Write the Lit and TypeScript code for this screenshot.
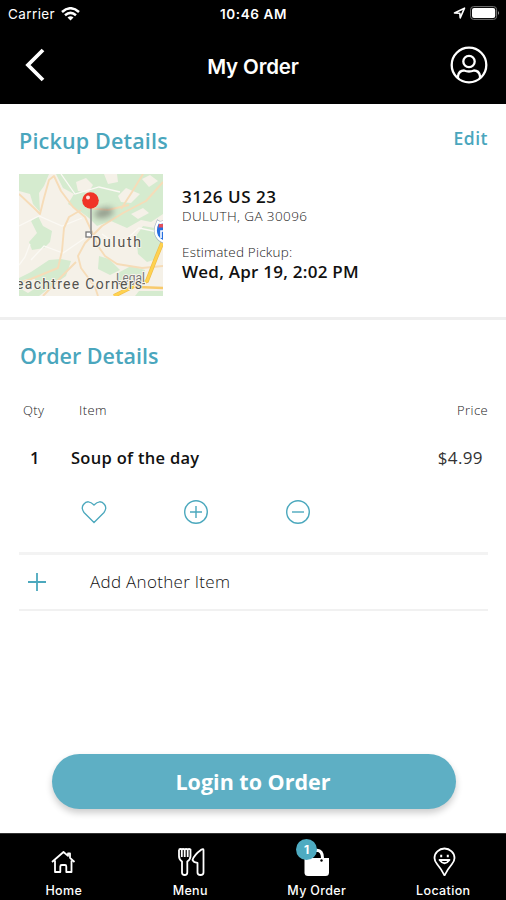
import { LitElement, html, css, svg } from "lit";
import { customElement } from "lit/decorators.js";

const navIcons = {
  home: svg`<path d="M3 15 L14.500 5 L19 8.900 V6.500 H21 V10.800 L25.500 15 M6 13.500 V25 H11.300 V19.500 Q11.300 18 12.800 18 H16 Q17.300 18 17.300 19.500 V25 H22.500 V13.500"/>`,
  menu: svg`<path d="M3 2.500 V9 Q3 12.500 6 14.500 V25.500 Q6 28 8.700 28 Q11.300 28 11.300 25.500 V14.500 Q14.500 12.500 14.500 9 V2.500 Q13 1.500 11.700 2.500 V10 M11.700 2.500 Q10 1.500 8.700 2.500 V10 M8.700 2.500 Q7 1.500 5.800 2.500 V10 M5.800 2.500 Q4.500 1.500 3 2.500 M27.500 3 Q27.500 1.500 25.500 2.500 Q18 8 16.500 13 Q17.500 15.500 21.500 16 V25.500 Q21.500 28 24.500 28 Q27.500 28 27.500 25.500 Z"/>`,
  bag: svg`<path d="M2.500 11 H27 V25.500 Q27 29 23.500 29 H6 Q2.500 29 2.500 25.500Z" fill="#fff" stroke="none"/><path d="M9 13 V8 Q9 3.200 15 3.200 Q20.500 3.500 20.500 11" stroke-width="3"/><circle cx="19.500" cy="13.500" r="1.200" fill="#000" stroke="none"/>`,
  pin: svg`<path d="M15.500 28.500 Q13 23 8 17 Q5.500 14 5.500 11 A10 9.500 0 0 1 25.500 11 Q25.500 14 23 17 Q18 23 15.500 28.500Z"/><path d="M10.500 13 Q15.500 19.500 20.500 13Z"/><path d="M11.200 9h2M17.800 9h2" stroke-width="2.400"/>`,
};

@customElement("map-preview")
class MapPreview extends LitElement {
  static styles = css`
    :host { display: block; width: 144px; height: 122px; }
    svg { display: block; }
    text { font-family: Roboto, "Liberation Sans", sans-serif; }
  `;
  render() {
    return html`<svg width="144" height="122" viewBox="0 0 144 122">
      <defs>
        <filter id="soft" x="-50%" y="-50%" width="200%" height="200%"><feGaussianBlur stdDeviation="3"/></filter>
        <clipPath id="frame"><rect width="144" height="122"/></clipPath>
      </defs>
      <g clip-path="url(#frame)">
        <rect width="144" height="122" fill="#f5f1e8"/>
        <g fill="#d5ebcf">
          <path d="M0 0H30L25 12 20 19 21 38 14 30 11 20 0 17Z"/>
          <path d="M37 0H144V40L132 48 122 46 108 54 92 47 78 52 70 44 62 38 49 30 55 20 44 14Z"/>
          <path d="M12 47 19 42 24 52 33 57 31 68 25 74 13 76 10 68 18 59Z"/>
          <path d="M0 104 12 98 30 86 42 85 52 87 47 102 33 112 20 122H0Z"/>
          <path d="M117 62 124 52 142 55 144 72 138 85 128 88 119 80Z"/>
          <path d="M80 82 90 85 101 96 91 101 79 95Z"/>
          <path d="M97 100 112 92 126 96 124 108 111 113 97 109Z"/>
          <path d="M120 117 144 117V122H116Z"/>
        </g>
        <g fill="#f5f1e8">
          <path d="M57 8 67 4 74 11 69 19 59 17Z"/>
          <path d="M99 22 107 14 121 20 112 29 102 28Z"/>
          <path d="M4 106 15 104 20 112 9 119 2 115Z"/>
          <path d="M85 0H98L99 8 89 10Z"/>
          <path d="M123 5 131 1 139 7 130 13Z"/>
          <path d="M112 40 124 34 130 39 119 45Z"/>
        </g>
        <g fill="none" stroke="#fbf9f4" stroke-width="1.300">
          <path d="M0 52 20 42 43 52 63 44M12 86 25 72 44 79 66 64M83 60 100 72 120 54 144 59M42 0 56 20 80 13 101 18M11 70 6 83 0 91"/>
        </g>
        <g fill="none" stroke="#f6dcb8" stroke-width="1.900" stroke-linejoin="round">
          <path d="M0 20 15 34 21 40 25 24 30 6 35 2 42 17 54 33 66 43 73 58 79 72 86 82 98 90 123 94 144 92"/>
          <path d="M144 8 127 27 104 39 83 52 66 69 59 82 62 94 76 113 79 122"/>
          <path d="M124 0 113 18 102 35"/>
          <path d="M62 36 50 43 45 54 43 77 39 94 12 105 0 109"/>
          <path d="M68 34 89 36 110 31"/>
          <path d="M57 88 46 99 24 122"/>
        </g>
        <path d="M144 67 137 84 128 107 113 113 95 122" fill="none" stroke="#efbd4b" stroke-width="4"/>
        <path d="M144 67 137 84 128 107 113 113 95 122" fill="none" stroke="#ffd24f" stroke-width="2.600"/>
        <path d="M119 113 144 114" stroke="#f8ca6b" stroke-width="2.600"/>
        <path d="M139 48 Q142 50 146 47 L152 52 V68 Q142 69 138 62 Q135 56 139 48Z" fill="#276fe0" stroke="#9eafc0" stroke-width="3.600"/>
        <path d="M139 48 Q142 50 146 47 L152 52 V68 Q142 69 138 62 Q135 56 139 48Z" fill="#276fe0" stroke="#fff" stroke-width="2.400"/>
        <path d="M140 50H146V53.500H139.500Z" fill="#e3505c"/>
        <path d="M145 57H142V64" fill="none" stroke="#fff" stroke-width="1.600"/>
        <ellipse cx="85" cy="39" rx="10" ry="5" fill="#5c5a54" opacity=".55" filter="url(#soft)" transform="rotate(-14 85 39)"/>
        <rect x="67" y="58" width="5.500" height="5" fill="#fff" stroke="#777" stroke-width="1.300"/>
        <path d="M72 30V60" stroke="#949494" stroke-width="1.700"/>
        <circle cx="71.500" cy="26.500" r="8.300" fill="#f03426"/>
        <circle cx="69" cy="23.500" r="2" fill="#fff" opacity=".85"/>
        <g stroke="#f8f5ed" stroke-width="1.800" paint-order="stroke">
          <text x="97" y="108" font-size="12" fill="#777" textLength="29" text-decoration="underline">Legal</text>
          <text x="73" y="73" font-size="14" fill="#55534f" textLength="49">Duluth</text>
          <text x="-3" y="115" font-size="14" fill="#55534f" textLength="126">eachtree Corners</text>
        </g>
      </g>
    </svg>`;
  }
}

@customElement("app-root")
class AppRoot extends LitElement {
  static styles = css`
    * { box-sizing: border-box; }
    :host { display: flex; flex-direction: column; height: 900px; background: #fff; color: #111;
      font-family: "Open Sans", "Noto Sans", sans-serif; white-space: nowrap; overflow: hidden; }
    svg { display: block; flex: none; }
    .top { background: #000; color: #fff; height: 104px; flex: none; font-family: Inter, Roboto, sans-serif; }
    .status { height: 27px; display: grid; grid-template-columns: 1fr auto 1fr; align-items: center; padding: 0 6px 0 8px; }
    .carrier { display: flex; gap: 6px; align-items: center; font-size: 13.500px; letter-spacing: .4px; height: 24px; }
    .clock { font-size: 13.500px; font-weight: 600; letter-spacing: .6px; margin-right: 1px; height: 18px; line-height: 18px; }
    .power { display: flex; justify-content: flex-end; align-items: center; gap: 4px; height: 25px; margin-top: -1px; }
    .bar { height: 77px; display: grid; grid-template-columns: 1fr auto 1fr; align-items: center; padding: 0 18px 0 24px; }
    .bar h1 { font-size: 20.500px; font-weight: 600; margin: 1px 6px 0 0; letter-spacing: -.15px; }
    .back { margin-top: -2px; }
    .user { justify-self: end; margin-top: -2px; }
    .pickup { height: 213px; padding: 22px 18px 0 19px; flex: none; }
    .heading { display: flex; justify-content: space-between; height: 48px; color: #4aa6bd; }
    h2 { margin: 0; color: #4aa6bd; font-size: 21.500px; line-height: 30px; font-weight: 600; letter-spacing: .17px; }
    .order h2 { letter-spacing: 0; padding-left: 2px; }
    .edit { font-size: 17.500px; line-height: 25px; font-weight: 600; letter-spacing: .5px; }
    .place { display: flex; gap: 19px; }
    .address { padding-top: 12px; }
    .strong { font-size: 17px; line-height: 23px; font-weight: 600; letter-spacing: .25px; }
    .street { letter-spacing: .55px; line-height: 22px; }
    .small { font-size: 13.500px; line-height: 16px; color: #222; font-weight: 300; letter-spacing: .4px; }
    .estimate { margin-top: 20px; letter-spacing: .2px; }
    .rule { height: 3px; background: #efefef; flex: none; }
    .order { padding: 21px 18px 0; flex: none; }
    .row { display: grid; grid-template-columns: 53px 1fr auto; align-items: center; }
    .labels { height: 18px; margin-top: 30px; font-size: 13px; color: #222; font-weight: 300; letter-spacing: .4px; }
    .labels span:first-child { padding-left: 5px; }
    .labels span:nth-child(2) { padding-left: 8px; }
    .item { height: 26px; margin-top: 25px; font-size: 16.500px; font-weight: 600; letter-spacing: .3px; }
    .item span:first-child { padding-left: 12px; }
    .price { font-weight: 400; color: #333; padding-right: 5px; font-size: 17px; letter-spacing: .4px; }
    .actions { display: flex; gap: 76px; padding: 0 0 0 63px; margin-top: 29px; height: 53px; }
    .add { display: flex; align-items: center; height: 59px; margin: 0 0 0 1px; border-top: 3px solid #f3f3f3; border-bottom: 2px solid #f1f1f1; font-size: 17px; color: #111; font-weight: 300; letter-spacing: .3px; padding: 0 0 1px 8px; gap: 43px; }
    .space { flex: 1; }
    .login { width: 404px; height: 55px; flex: none; margin: 0 0 24px 52px; border: 0; border-radius: 28px; background: #5eafc4; color: #fff; font: 700 21.500px "Open Sans", sans-serif; box-shadow: 0 4px 7px #0003; padding: 0 2px 0 0; }
    nav { height: 67px; flex: none; background: #000; color: #fff; display: grid; grid-template-columns: repeat(4, 1fr); font: 500 12.500px Inter, Roboto, sans-serif; letter-spacing: .35px; border-top: 1px solid #333; }
    .tab { display: flex; flex-direction: column; align-items: center; padding: 13px 0 0 1px; line-height: 16px; gap: 7px; }
    .icon { position: relative; height: 29px; }
    .icon svg { fill: none; stroke: #fff; stroke-width: 1.800; stroke-linejoin: round; }
    .badge { position: absolute; left: -6px; top: -8px; width: 21px; height: 21px; border-radius: 50%; background: #4eabc1; text-align: center; line-height: 21px; font-weight: 700; font-size: 12px; }
  `;

  private tab(name: string, icon: unknown, badge = "") {
    return html`<div class="tab"><div class="icon"><svg width="29" height="29" viewBox="0 0 29 29">${icon}</svg>${badge ? html`<span class="badge">${badge}</span>` : ""}</div><span>${name}</span></div>`;
  }

  render() {
    return html`
      <header class="top">
        <div class="status">
          <div class="carrier"><span>Carrier</span><svg width="19" height="14" viewBox="0 0 19 14" fill="none" stroke="#fff" stroke-width="2.500"><path d="M1 5 Q9.500-2.500 18 5M4 8.300 Q9.500 3.500 15 8.300"/><path d="M9.500 13.500 6.500 10.500Q9.500 8 12.500 10.500Z" fill="#fff" stroke="none"/></svg></div>
          <div class="clock">10:46 AM</div>
          <div class="power"><svg width="13" height="12" viewBox="0 0 13 12"><path d="M1.500 6 11.500 1.200 7.200 10.800 6.800 6.200Z" fill="none" stroke="#fff" stroke-width="1.600" stroke-linejoin="round"/></svg><svg width="30" height="14" viewBox="0 0 30 14"><rect x=".6" y=".6" width="26" height="12.800" rx="3" fill="none" stroke="#777"/><rect x="2" y="2" width="23.200" height="10" rx="2" fill="#fff"/><path d="M28 5Q30 7 28 9Z" fill="#999"/></svg></div>
        </div>
        <div class="bar">
          <svg class="back" width="22" height="34" viewBox="0 0 22 34"><path d="M19 2 4 17 19 32" fill="none" stroke="#fff" stroke-width="3.800"/></svg>
          <h1>My Order</h1>
          <svg class="user" width="38" height="38" viewBox="0 0 38 38" fill="none" stroke="#fff" stroke-width="2.300"><circle cx="19" cy="19" r="17.300"/><circle cx="19" cy="15.500" r="5.700"/><path d="M8 32V30Q9 24.500 14 24.500Q19 26.500 24 24.500Q29 24.500 30 30V32"/></svg>
        </div>
      </header>
      <section class="pickup">
        <div class="heading"><h2>Pickup Details</h2><span class="edit">Edit</span></div>
        <div class="place"><map-preview></map-preview>
          <div class="address"><div class="strong street">3126 US 23</div><div class="small">DULUTH, GA 30096</div><div class="small estimate">Estimated Pickup:</div><div class="strong">Wed, Apr 19, 2:02 PM</div></div>
        </div>
      </section>
      <div class="rule"></div>
      <section class="order">
        <h2>Order Details</h2>
        <div class="row labels"><span>Qty</span><span>Item</span><span>Price</span></div>
        <div class="row item"><span>1</span><span>Soup of the day</span><span class="price">$4.99</span></div>
        <div class="actions">
          <svg width="26" height="26" viewBox="0 0 26 26" fill="none" stroke="#4ba8bd" stroke-width="1.300"><path d="M13 23.500 3 13.500Q-.2 9 2.500 5.500Q7-.2 13 6Q19-.2 23.500 5.500Q26.200 9 23 13.500Z"/></svg>
          <svg width="26" height="26" viewBox="0 0 26 26" fill="none" stroke="#4ba8bd" stroke-width="1.400"><circle cx="13" cy="13" r="11.300"/><path d="M7 13H19M13 7V19"/></svg>
          <svg width="26" height="26" viewBox="0 0 26 26" fill="none" stroke="#4ba8bd" stroke-width="1.400"><circle cx="13" cy="13" r="11.300"/><path d="M7 13H19"/></svg>
        </div>
        <div class="add"><svg width="20" height="20" viewBox="0 0 20 20" stroke="#4ba8bd" stroke-width="1.800"><path d="M1 10H19M10 1V19"/></svg><span>Add Another Item</span></div>
      </section>
      <div class="space"></div>
      <button class="login">Login to Order</button>
      <nav>${this.tab("Home", navIcons.home)}${this.tab("Menu", navIcons.menu)}${this.tab("My Order", navIcons.bag, "1")}${this.tab("Location", navIcons.pin)}</nav>
    `;
  }
}
